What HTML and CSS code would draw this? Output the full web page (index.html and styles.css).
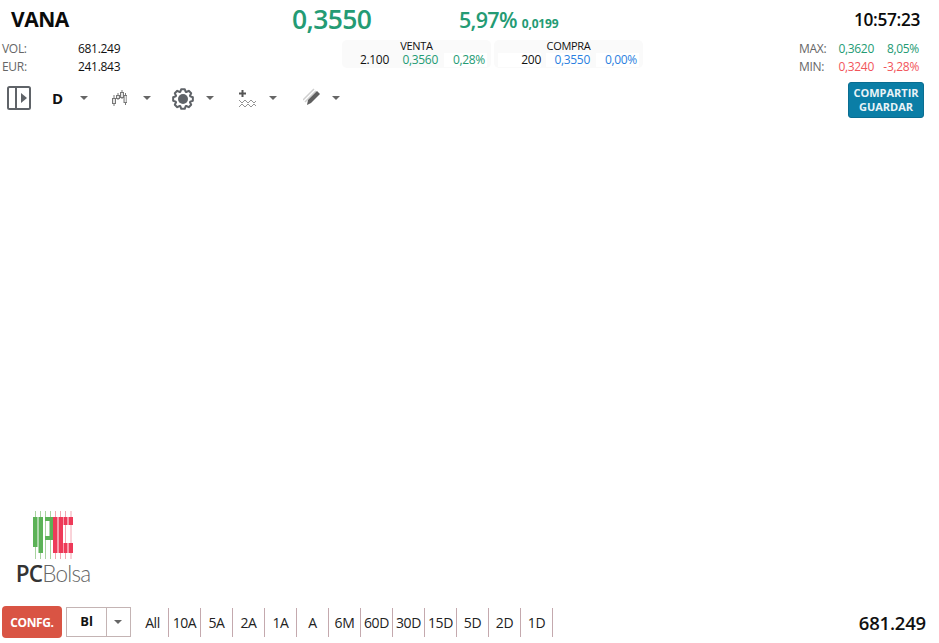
FILE: index.html
```html
<!DOCTYPE html>
<html lang="es">
<head>
<meta charset="utf-8">
<title>VANA</title>
<link rel="stylesheet" href="styles.css">
</head>
<body>
<div class="app">
  <header class="top">
    <div class="ticker">VANA</div>
    <div class="price">0,3550</div>
    <div class="change"><span class="pct">5,97%</span><span class="abs">0,0199</span></div>
    <div class="clock">10:57:23</div>
  </header>
  <section class="stats">
    <div class="left-stats">
      <span class="lbl">VOL:</span><span class="val">681.249</span>
      <span class="lbl">EUR:</span><span class="val">241.843</span>
    </div>
    <div class="quotes">
      <div class="quote">
        <div class="quote-title">VENTA</div>
        <div class="quote-row">
          <span class="q-size">2.100</span>
          <span class="q-price green">0,3560</span>
          <span class="q-pct green white">0,28%</span>
        </div>
      </div>
      <div class="quote">
        <div class="quote-title">COMPRA</div>
        <div class="quote-row">
          <span class="q-size white">200</span>
          <span class="q-price blue white">0,3550</span>
          <span class="q-pct blue white">0,00%</span>
        </div>
      </div>
    </div>
    <div class="right-stats">
      <span class="lbl">MAX:</span><span class="green">0,3620</span><span class="green">8,05%</span>
      <span class="lbl">MIN:</span><span class="red">0,3240</span><span class="red">-3,28%</span>
    </div>
  </section>
  <nav class="toolbar">
    <div class="tools">
      <svg class="ic-panel" width="24" height="24" viewBox="0 0 24 24"><rect x="1" y="1" width="22" height="22" rx="1.5" fill="none" stroke="#5f6368" stroke-width="2"/><path d="M9 1v22" stroke="#5f6368" stroke-width="2"/><path d="M14 7l6 5-6 5z" fill="#5f6368"/></svg>
      <span class="interval">D</span>
      <i class="caret c1"></i>
      <svg class="ic-candles" width="15" height="16" viewBox="0 0 15 16"><g stroke="#777" fill="#e4e4e4"><path d="M2 5v11M6 3v7M10 0v9M13.500 3v12" fill="none"/><rect x=".5" y="8.500" width="3" height="5"/><rect x="4.500" y="5.500" width="3" height="3"/><rect x="8.500" y="2.500" width="3" height="5"/><rect x="12" y="5.500" width="3" height="7"/></g></svg>
      <i class="caret c2"></i>
      <svg class="ic-gear" width="22" height="22" viewBox="0 0 22 22"><polygon points="8.37,3.76 9.26,1.15 12.74,1.15 13.63,3.76 14.26,4.02 16.74,2.81 19.19,5.26 17.98,7.74 18.24,8.37 20.85,9.26 20.85,12.74 18.24,13.63 17.98,14.26 19.19,16.74 16.74,19.19 14.26,17.98 13.63,18.24 12.74,20.85 9.26,20.85 8.37,18.24 7.74,17.98 5.26,19.19 2.81,16.74 4.02,14.26 3.76,13.63 1.15,12.74 1.15,9.26 3.76,8.37 4.02,7.74 2.81,5.26 5.26,2.81 7.74,4.02" fill="none" stroke="#5f6368" stroke-width="2" stroke-linejoin="round"/><circle cx="11" cy="11" r="5" fill="#5f6368"/></svg>
      <i class="caret c3"></i>
      <svg class="ic-indic" width="18" height="18" viewBox="0 0 18 18"><path d="M3.500 0v7M0 3.500h7" stroke="#555" stroke-width="2"/><path d="M0 10l3 3 3-3 3 3 3-3 3 3 2-2M0 17l3-3 3 3 3-3 3 3 3-3 2 2" fill="none" stroke="#888" stroke-width=".9"/></svg>
      <i class="caret c4"></i>
      <svg class="ic-pencil" width="18" height="18" viewBox="0 0 18 18"><path d="M0 12L11 1M2 14L13 3" stroke="#cfcfcf" stroke-width="1.500"/><path d="M4 17l1-5 9-9 3 3-9 9z" fill="#5f5f5f"/></svg>
      <i class="caret c5"></i>
    </div>
    <button class="share">COMPARTIR<br>GUARDAR</button>
  </nav>
  <main class="chart">
    <div class="logo">
      <svg class="logo-mark" width="42" height="48" viewBox="0 0 42 48">
        <g stroke-width="1">
          <path d="M2.500 0v48M7.500 0v48M12.500 0v48M17.500 0v48" stroke="#a9d3a0"/>
          <path d="M22.500 0v48M27.500 0v48M32.500 0v48M38 0v48" stroke="#f4a6b2"/>
        </g>
        <g fill="#5cb257">
          <rect x="0" y="6" width="4.500" height="30"/>
          <rect x="5.500" y="6" width="4.500" height="36"/>
          <rect x="12" y="6" width="8" height="4"/>
          <rect x="16.500" y="6" width="3.500" height="23"/>
          <rect x="12" y="25" width="8" height="4"/>
        </g>
        <g fill="#ee3a59">
          <rect x="20" y="6" width="4.500" height="36"/>
          <rect x="25.500" y="6" width="4.500" height="36"/>
          <rect x="30.500" y="6" width="4" height="8"/>
          <rect x="35.500" y="6" width="4.500" height="8"/>
          <rect x="30.500" y="32" width="4" height="10"/>
          <rect x="35.500" y="32" width="4.500" height="10"/>
        </g>
      </svg>
      <div class="logo-text"><b>PC</b>Bolsa</div>
    </div>
  </main>
  <footer class="bottom">
    <button class="config">CONFG.</button>
    <div class="mode"><span class="mode-val">Bl</span><span class="mode-drop"><i class="caret"></i></span></div>
    <div class="ranges">
      <span>All</span><span>10A</span><span>5A</span><span>2A</span><span>1A</span><span>A</span><span>6M</span><span>60D</span><span>30D</span><span>15D</span><span>5D</span><span>2D</span><span>1D</span>
    </div>
    <div class="total">681.249</div>
  </footer>
</div>
</body>
</html>
```
FILE: styles.css
```css
* { box-sizing: border-box; }
html, body { margin: 0; height: 100%; background: #fff; }
body { font-family: "Open Sans", "Noto Sans", sans-serif; color: #111; overflow: hidden; }
.app { height: 643px; width: 939px; display: flex; flex-direction: column; }

.top { height: 38px; display: grid; grid-template-columns: 281px 167px 1fr auto; align-items: center; padding: 0 19px 0 11px; }
.ticker { font-size: 21px; font-weight: 700; letter-spacing: -.5px; color: #0b0b0b; }
.price { font-size: 26.500px; font-weight: 600; color: #249b74; letter-spacing: -.6px; }
.change { color: #249b74; display: flex; align-items: baseline; }
.pct { font-size: 21.500px; font-weight: 600; letter-spacing: -.7px; }
.abs { font-size: 12px; font-weight: 700; margin-left: 5px; letter-spacing: -.2px; }
.clock { font-size: 17.300px; font-weight: 600; letter-spacing: -.35px; color: #0b0b0b; }

.stats { height: 38px; display: flex; font-size: 12px; line-height: 18px; letter-spacing: -.3px; }
.left-stats { width: 342px; padding: 2px 0 0 2px; display: grid; grid-template-columns: 76px 1fr; align-content: start; }
.lbl { color: #666; }
.val { color: #111; }
.quotes { display: flex; gap: 3px; height: 28px; margin-top: 2px; }
.quote { width: 149px; height: 28px; background: #fafafa; border-radius: 5px; padding: 0 4px; }
.quote-title { text-align: center; font-size: 11px; line-height: 12px; color: #111; }
.quote-row { display: flex; height: 14px; line-height: 14px; margin-top: 1px; }
.q-size { width: 43px; text-align: right; }
.q-price { width: 44px; margin-left: 5px; text-align: right; }
.q-pct { flex: 1; text-align: right; padding-right: 2px; margin-left: 6px; }
.white { background: #fff; }
.green { color: #249b74; }
.blue { color: #2c7fe0; }
.red { color: #f2555b; }
.right-stats { margin-left: auto; padding: 2px 20px 0 0; display: grid; grid-template-columns: 40px 35px 45px; grid-auto-rows: 18px; align-content: start; justify-items: end; }
.right-stats .lbl { justify-self: start; }

.toolbar { height: 48px; padding: 0 15px 0 7px; display: flex; justify-content: space-between; align-items: center; }
.tools { display: flex; align-items: center; margin-top: -4px; }
.caret { display: inline-block; width: 0; height: 0; margin-right: 1px; border-left: 4px solid transparent; border-right: 4px solid transparent; border-top: 4px solid #666; }
.interval { font-size: 15px; font-weight: 700; margin-left: 21px; width: 12px; }
.c1 { margin-left: 16px; }
.ic-candles { margin-left: 23px; }
.c2 { margin-left: 16px; }
.ic-gear { margin-left: 20px; margin-top: 2px; }
.c3 { margin-left: 12px; }
.ic-indic { margin-left: 24px; margin-top: 2px; }
.c4 { margin-left: 12px; }
.ic-pencil { margin-left: 25px; margin-top: -2px; }
.c5 { margin-left: 11px; }
.share { width: 76px; height: 36px; padding: 0; border: 1px solid #0a6d91; border-radius: 3px; background: #0b7ea6; color: #e9f3f7; font: 700 11px/14px "Open Sans", sans-serif; letter-spacing: 0; }

.chart { flex: 1; display: flex; align-items: flex-end; padding: 0 0 17px 16px; }
.logo { display: flex; flex-direction: column; align-items: center; width: 74px; }
.logo-mark { display: block; margin-left: 1px; }
.logo-text { font-size: 22.500px; line-height: 30px; color: #666; font-weight: 300; letter-spacing: -.8px; font-family: "Lato", sans-serif; }
.logo-text b { color: #333; font-weight: 600; font-family: "Open Sans", sans-serif; }

.bottom { height: 32px; margin-bottom: 5px; display: flex; align-items: center; padding: 0 13px 0 2px; }
.config { width: 60px; height: 32px; padding: 0; border: 0; border-radius: 4px; background: #d95444; color: #fff; font: 700 12px "Open Sans", sans-serif; letter-spacing: -.4px; }
.mode { margin-left: 4px; height: 30px; width: 65px; display: flex; border: 1px solid #c4b4b4; }
.mode-val { width: 40px; text-align: center; font-size: 13px; line-height: 26px; font-weight: 700; border-right: 1px solid #c4b4b4; }
.mode-drop { flex: 1; display: flex; align-items: center; justify-content: center; }
.ranges { display: flex; margin-left: 6px; }
.ranges span { width: 32px; height: 29px; line-height: 29px; font-size: 14px; text-align: center; letter-spacing: -.4px; border-right: 1px solid #c4a9ae; color: #222; }
.total { margin-left: auto; font-size: 18.500px; font-weight: 600; letter-spacing: -.2px; color: #111; }
```
